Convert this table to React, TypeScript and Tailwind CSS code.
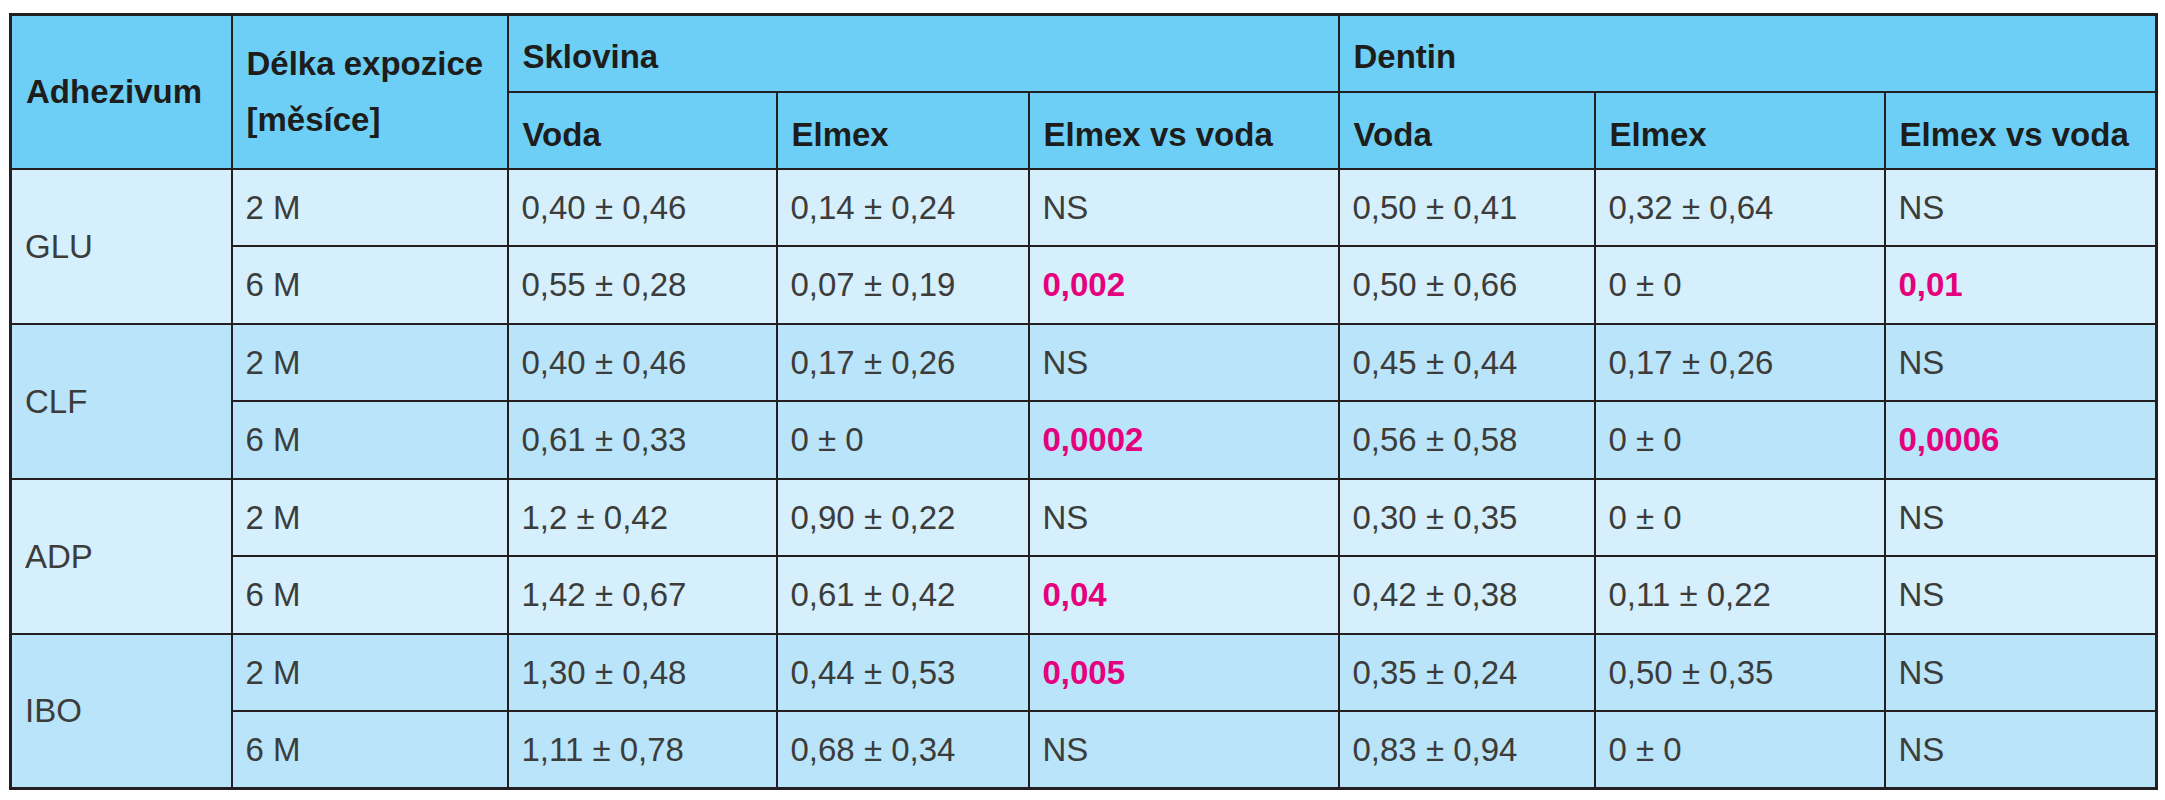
const groups = [
  {
    name: 'GLU',
    bg: 'bg-[#d5effc]',
    rows: [
      ['2 M', '0,40 ± 0,46', '0,14 ± 0,24', 'NS', '0,50 ± 0,41', '0,32 ± 0,64', 'NS'],
      ['6 M', '0,55 ± 0,28', '0,07 ± 0,19', '*0,002', '0,50 ± 0,66', '0 ± 0', '*0,01'],
    ],
  },
  {
    name: 'CLF',
    bg: 'bg-[#b9e4f9]',
    rows: [
      ['2 M', '0,40 ± 0,46', '0,17 ± 0,26', 'NS', '0,45 ± 0,44', '0,17 ± 0,26', 'NS'],
      ['6 M', '0,61 ± 0,33', '0 ± 0', '*0,0002', '0,56 ± 0,58', '0 ± 0', '*0,0006'],
    ],
  },
  {
    name: 'ADP',
    bg: 'bg-[#d5effc]',
    rows: [
      ['2 M', '1,2 ± 0,42', '0,90 ± 0,22', 'NS', '0,30 ± 0,35', '0 ± 0', 'NS'],
      ['6 M', '1,42 ± 0,67', '0,61 ± 0,42', '*0,04', '0,42 ± 0,38', '0,11 ± 0,22', 'NS'],
    ],
  },
  {
    name: 'IBO',
    bg: 'bg-[#b9e4f9]',
    rows: [
      ['2 M', '1,30 ± 0,48', '0,44 ± 0,53', '*0,005', '0,35 ± 0,24', '0,50 ± 0,35', 'NS'],
      ['6 M', '1,11 ± 0,78', '0,68 ± 0,34', 'NS', '0,83 ± 0,94', '0 ± 0', 'NS'],
    ],
  },
]

const widths = [221, 276, 269, 252, 310, 256, 290, 272]

const th = 'border-2 border-[#231f20] pl-[14px] text-left font-bold text-[#1d1d1b] align-middle'
const td = 'border-2 border-[#231f20] pl-[13px] text-left font-normal text-[#3c3c3b] align-middle'

// values marked with * are the significant ones (pink, bold)
const Value = ({ v }: { v: string }) =>
  v.startsWith('*') ? <span className="font-bold text-[#e5007d]">{v.slice(1)}</span> : <>{v}</>

export default function App() {
  return (
    <div className="min-h-[800px] w-[2165px] bg-white pl-[9px] pt-[13px]">
      <table
        className="table-fixed border-collapse border-[3px] border-[#231f20] text-[33px] leading-none"
        style={{ width: 2146, fontFamily: '"Liberation Sans", Arial, sans-serif' }}
      >
        <colgroup>
          {widths.map((w, i) => (
            <col key={i} style={{ width: w }} />
          ))}
        </colgroup>
        <thead className="bg-[#6dcff6]">
          <tr className="h-[77px]">
            <th rowSpan={2} className={th}>Adhezivum</th>
            <th rowSpan={2} className={th + ' leading-[56px]'}>
              Délka expozice
              <br />
              [měsíce]
            </th>
            <th colSpan={3} className={th + ' pt-[6px]'}>Sklovina</th>
            <th colSpan={3} className={th + ' pt-[6px]'}>Dentin</th>
          </tr>
          <tr className="h-[77px]">
            <th className={th + ' pt-[8px]'}>Voda</th>
            <th className={th + ' pt-[8px]'}>Elmex</th>
            <th className={th + ' pt-[8px]'}>Elmex vs voda</th>
            <th className={th + ' pt-[8px]'}>Voda</th>
            <th className={th + ' pt-[8px]'}>Elmex</th>
            <th className={th + ' pt-[8px]'}>Elmex vs voda</th>
          </tr>
        </thead>
        <tbody>
          {groups.map((g) =>
            g.rows.map((r, ri) => (
              <tr key={g.name + ri} className={'h-[77.5px] ' + g.bg}>
                {ri === 0 && (
                  <td rowSpan={2} className={td}>{g.name}</td>
                )}
                {r.map((c, ci) => (
                  <td key={ci} className={td}>
                    <Value v={c} />
                  </td>
                ))}
              </tr>
            ))
          )}
        </tbody>
      </table>
    </div>
  )
}
